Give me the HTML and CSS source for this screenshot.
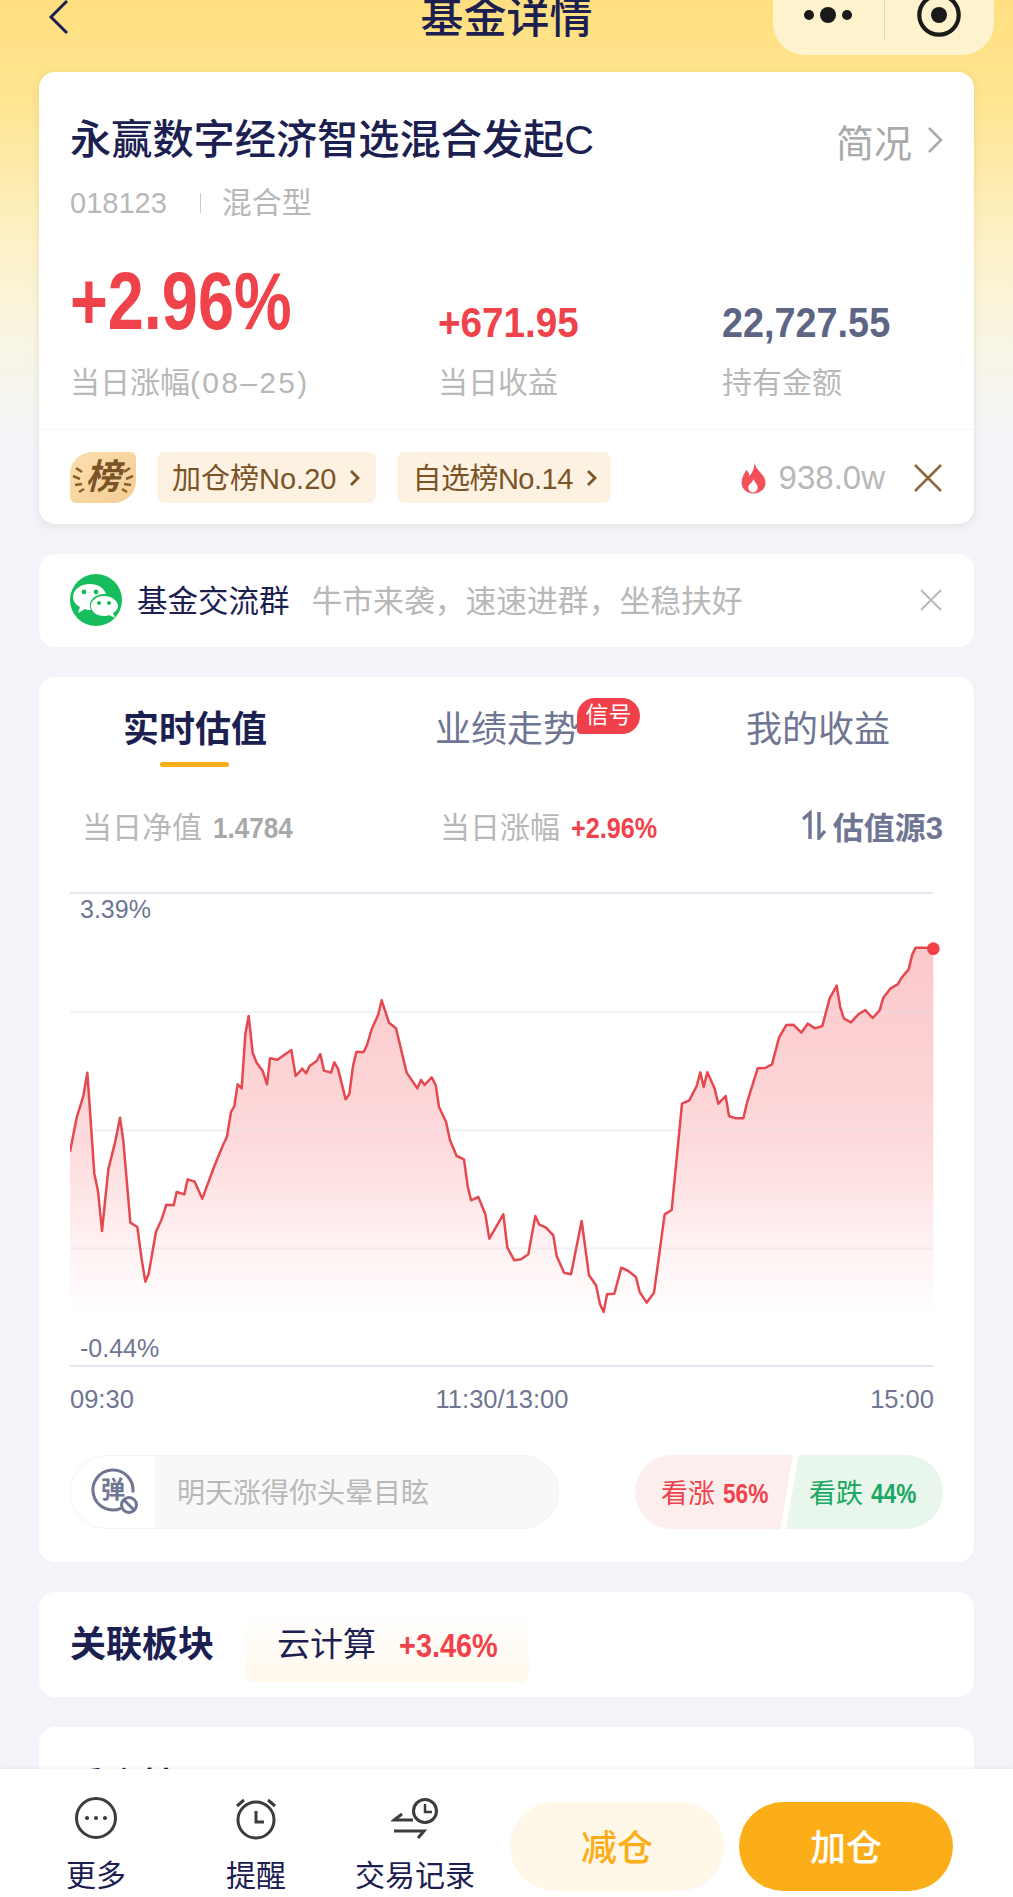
FILE: index.html
```html
<!DOCTYPE html>
<html lang="zh-CN">
<head>
    <meta charset="UTF-8">
    <meta name="viewport" content="width=device-width, initial-scale=1.0">
    <title>基金详情</title>
    <link rel="stylesheet" href="styles.css">
</head>
<body>
<div class="page">
    <div class="scroll">
        <div class="nav">
            <svg class="nav-back" width="24" height="38" viewBox="0 0 24 38"><path d="M20 2 L4 18 L20 34" fill="none" stroke="#1c2050" stroke-width="3"/></svg>
            <div class="nav-title">基金详情</div>
            <div class="capsule">
                <svg width="48" height="16" viewBox="0 0 48 16"><circle cx="5" cy="8" r="5" fill="#1a1a1a"/><circle cx="24" cy="8" r="8" fill="#1a1a1a"/><circle cx="43" cy="8" r="5" fill="#1a1a1a"/></svg>
                <i class="capsule-line"></i>
                <svg width="46" height="46" viewBox="0 0 46 46"><circle cx="23" cy="23" r="19.7" fill="none" stroke="#1a1a1a" stroke-width="4.2"/><circle cx="23" cy="23" r="8" fill="#1a1a1a"/></svg>
            </div>
        </div>

        <div class="card fund">
            <div class="fund-head">
                <div class="fund-name">永赢数字经济智选混合发起C</div>
                <div class="fund-more">简况<svg width="16" height="28" viewBox="0 0 16 28"><path d="M2 2 L14 14 L2 26" fill="none" stroke="#aaa" stroke-width="2.5"/></svg></div>
            </div>
            <div class="fund-meta"><span class="fund-code">018123</span><i></i><span>混合型</span></div>
            <div class="stats">
                <div class="stat stat-main">
                    <div class="num num-big red">+2.96%</div>
                    <div class="stat-label">当日涨幅<span class="stat-date">(08–25)</span></div>
                </div>
                <div class="stat stat-mid">
                    <div class="num num-gain red">+671.95</div>
                    <div class="stat-label">当日收益</div>
                </div>
                <div class="stat stat-hold">
                    <div class="num num-hold slate">22,727.55</div>
                    <div class="stat-label">持有金额</div>
                </div>
            </div>
            <div class="rank-row">
                <div class="rank-badge">
                    <svg width="66" height="51" viewBox="0 0 66 51"><path d="M6 16 L12 20 M3 24 L10 27 M5 33 L12 32 M9 40 L14 37 M60 16 L54 20 M63 24 L56 27 M61 33 L54 32 M57 40 L52 37" stroke="#8a5f2a" stroke-width="2.5" fill="none"/></svg>
                    <span>榜</span>
                </div>
                <div class="chip">加仓榜No.20<svg width="11" height="18" viewBox="0 0 11 18"><path d="M2 2 L9 9 L2 16" fill="none" stroke="#7a5426" stroke-width="2.8"/></svg></div>
                <div class="chip chip-pick">自选榜No.14<svg width="11" height="18" viewBox="0 0 11 18"><path d="M2 2 L9 9 L2 16" fill="none" stroke="#7a5426" stroke-width="2.8"/></svg></div>
                <div class="heat">
                    <svg width="27" height="32" viewBox="0 0 26 30"><path d="M14 0 C15 6 20 9 23 14 C27 21 23 29 14 30 C5 30 0 24 2 16 C3 12 5 10 6 7 C8 9 9 11 9 13 C12 10 14 5 14 0 Z" fill="#f4505a"/><path d="M13 16 C14 19 17 21 17 24 C17 27 15 29 13 29 C10 29 8 27 8 24 C8 21 12 20 13 16 Z" fill="#fff"/></svg>
                    <span>938.0w</span>
                </div>
                <svg class="rank-close" width="30" height="30" viewBox="0 0 30 30"><path d="M2 2 L28 28 M28 2 L2 28" stroke="#8a6a3a" stroke-width="2.5"/></svg>
            </div>
        </div>

        <div class="card group">
            <svg class="wx" width="52" height="52" viewBox="0 0 52 52">
                <circle cx="26" cy="26" r="26" fill="#16bd5c"/>
                <path d="M20 10 C10 10 3 16 3 23 C3 27 6 31 10 33 L8 39 L15 35 C17 36 19 36 21 36 C20 34 20 33 20 31 C20 25 26 20 34 20 L36 20 C34 14 28 10 20 10 Z" fill="#fff"/>
                <path d="M34 22 C26 22 21 27 21 32 C21 38 27 42 34 42 C36 42 37 42 39 41 L45 44 L43 39 C46 37 48 35 48 32 C48 27 42 22 34 22 Z" fill="#fff"/>
                <circle cx="14" cy="18" r="2.4" fill="#16bd5c"/><circle cx="26" cy="18" r="2.4" fill="#16bd5c"/>
                <circle cx="29" cy="29" r="2" fill="#16bd5c"/><circle cx="39" cy="29" r="2" fill="#16bd5c"/>
            </svg>
            <span class="group-name">基金交流群</span>
            <span class="group-desc">牛市来袭&#65292;速速进群&#65292;坐稳扶好</span>
            <svg class="group-close" width="24" height="24" viewBox="0 0 24 24"><path d="M2 2 L22 22 M22 2 L2 22" stroke="#bbb" stroke-width="2.2"/></svg>
        </div>

        <div class="card trend">
            <div class="tabs">
                <div class="tab tab-on">实时估值</div>
                <div class="tab">业绩走势<span class="signal">信号</span></div>
                <div class="tab">我的收益</div>
            </div>
            <div class="summary">
                <div class="sum-item sum-first">当日净值 <b class="sum-nav">1.4784</b></div>
                <div class="sum-item sum-second">当日涨幅 <b class="sum-rise red">+2.96%</b></div>
                <div class="sum-src">
                    <svg width="26" height="30" viewBox="0 0 26 30"><path d="M9 29 L9 3 L2 9 M18 2 L18 28 L24 21" fill="none" stroke="#6f7592" stroke-width="3.4"/></svg>
                    估值源3
                </div>
            </div>
            <div class="chart">
                <svg class="chart-svg" width="875" height="500" viewBox="60 0 2625 1500">
                    <defs>
                        <linearGradient id="area" x1="0" y1="0" x2="0" y2="1">
                            <stop offset="0" stop-color="#fbc8cb"/>
                            <stop offset="0.5" stop-color="#fdd8da"/>
                            <stop offset="0.8" stop-color="#fff0f1"/>
                            <stop offset="1" stop-color="#ffffff"/>
                        </linearGradient>
                    </defs>
                    <path class="chart-top" d="M60 36 H2650"/>
                    <path fill="url(#area)" d="M60 1300 L60 812 L80 710 L100 645 L112 575 L133 878 L144 930 L156 1050 L175 865 L195 785 L210 710 L220 780 L241 1025 L262 1038 L275 1135 L286 1202 L296 1178 L318 1052 L335 1015 L349 971 L371 973 L380 933 L403 940 L413 895 L434 902 L457 953 L492 858 L520 790 L531 767 L543 693 L553 675 L563 610 L575 622 L586 460 L596 405 L608 515 L620 545 L638 570 L651 610 L660 532 L682 536 L724 507 L737 585 L757 563 L768 577 L779 555 L800 540 L811 519 L822 569 L843 575 L853 544 L864 563 L887 655 L898 640 L909 555 L919 513 L941 513 L951 492 L965 445 L985 400 L995 358 L1017 425 L1038 442 L1070 575 L1102 622 L1113 597 L1124 612 L1145 589 L1157 612 L1167 678 L1188 722 L1200 778 L1220 825 L1242 835 L1253 915 L1263 958 L1285 948 L1306 1000 L1318 1073 L1360 1000 L1372 1100 L1393 1138 L1413 1135 L1435 1120 L1456 1005 L1467 1030 L1488 1040 L1510 1063 L1520 1125 L1542 1175 L1563 1180 L1595 1020 L1617 1183 L1638 1213 L1650 1270 L1661 1293 L1671 1240 L1693 1238 L1714 1160 L1735 1170 L1758 1188 L1769 1233 L1790 1265 L1812 1235 L1844 1000 L1865 987 L1896 668 L1918 658 L1940 615 L1951 574 L1961 618 L1972 574 L1993 620 L2005 668 L2027 645 L2037 705 L2058 712 L2080 712 L2091 665 L2123 562 L2145 561 L2166 550 L2187 470 L2209 432 L2230 431 L2254 455 L2273 428 L2295 442 L2317 435 L2339 352 L2360 314 L2371 380 L2382 413 L2403 424 L2425 400 L2446 387 L2468 411 L2489 388 L2500 350 L2522 322 L2543 310 L2555 290 L2576 265 L2587 220 L2597 200 L2640 200 L2650 203 L2650 1300 Z"/>
                    <path class="chart-grid" d="M60 393 H2650 M60 748 H2650 M60 1102 H2650"/>
                    <path class="chart-top" d="M60 1455 H2650"/>
                    <path class="chart-line" d="M60 812 L80 710 L100 645 L112 575 L133 878 L144 930 L156 1050 L175 865 L195 785 L210 710 L220 780 L241 1025 L262 1038 L275 1135 L286 1202 L296 1178 L318 1052 L335 1015 L349 971 L371 973 L380 933 L403 940 L413 895 L434 902 L457 953 L492 858 L520 790 L531 767 L543 693 L553 675 L563 610 L575 622 L586 460 L596 405 L608 515 L620 545 L638 570 L651 610 L660 532 L682 536 L724 507 L737 585 L757 563 L768 577 L779 555 L800 540 L811 519 L822 569 L843 575 L853 544 L864 563 L887 655 L898 640 L909 555 L919 513 L941 513 L951 492 L965 445 L985 400 L995 358 L1017 425 L1038 442 L1070 575 L1102 622 L1113 597 L1124 612 L1145 589 L1157 612 L1167 678 L1188 722 L1200 778 L1220 825 L1242 835 L1253 915 L1263 958 L1285 948 L1306 1000 L1318 1073 L1360 1000 L1372 1100 L1393 1138 L1413 1135 L1435 1120 L1456 1005 L1467 1030 L1488 1040 L1510 1063 L1520 1125 L1542 1175 L1563 1180 L1595 1020 L1617 1183 L1638 1213 L1650 1270 L1661 1293 L1671 1240 L1693 1238 L1714 1160 L1735 1170 L1758 1188 L1769 1233 L1790 1265 L1812 1235 L1844 1000 L1865 987 L1896 668 L1918 658 L1940 615 L1951 574 L1961 618 L1972 574 L1993 620 L2005 668 L2027 645 L2037 705 L2058 712 L2080 712 L2091 665 L2123 562 L2145 561 L2166 550 L2187 470 L2209 432 L2230 431 L2254 455 L2273 428 L2295 442 L2317 435 L2339 352 L2360 314 L2371 380 L2382 413 L2403 424 L2425 400 L2446 387 L2468 411 L2489 388 L2500 350 L2522 322 L2543 310 L2555 290 L2576 265 L2587 220 L2597 200 L2640 200 L2650 203"/>
                    <circle cx="2650" cy="203" r="19" fill="#f04049"/>
                </svg>
                <span class="chart-y chart-y-top">3.39%</span>
                <span class="chart-y chart-y-low">-0.44%</span>
            </div>
            <div class="times"><span>09:30</span><span>11:30/13:00</span><span>15:00</span></div>
            <div class="opinion">
                <div class="danmu">
                    <div class="danmu-icon">
                        <svg width="48" height="52" viewBox="0 0 48 52"><path d="M31 42.3 A20 20 0 1 1 42.8 26.5" fill="none" stroke="#6f7592" stroke-width="3"/><circle cx="39" cy="39" r="7.5" fill="#fff" stroke="#6f7592" stroke-width="3"/><path d="M34 34 L44 44" stroke="#6f7592" stroke-width="3"/></svg>
                        <span>弹</span>
                    </div>
                    <div class="danmu-text">明天涨得你头晕目眩</div>
                </div>
                <div class="vote">
                    <div class="vote-up">看涨 <b>56%</b></div>
                    <div class="vote-down">看跌 <b>44%</b></div>
                </div>
            </div>
        </div>

        <div class="card sector">
            <div class="sector-title">关联板块</div>
            <div class="sector-chip">云计算<b class="red">+3.46%</b></div>
        </div>

        <div class="card peek">
            <div class="peek-title">重仓持股</div>
        </div>
    </div>

    <div class="bar">
        <div class="bar-item bar-more">
            <svg width="44" height="44" viewBox="0 0 44 44"><circle cx="22" cy="22" r="19.5" fill="none" stroke="#3c3c3c" stroke-width="3"/><circle cx="13" cy="22" r="2.1" fill="#3c3c3c"/><circle cx="22" cy="22" r="2.1" fill="#3c3c3c"/><circle cx="31" cy="22" r="2.1" fill="#3c3c3c"/></svg>
            <span>更多</span>
        </div>
        <div class="bar-item bar-remind">
            <svg width="44" height="44" viewBox="0 0 44 44"><circle cx="22" cy="24" r="18" fill="none" stroke="#3c3c3c" stroke-width="3"/><path d="M22 15 V26 H30 M3 10 L10 4 M41 10 L34 4" fill="none" stroke="#3c3c3c" stroke-width="3"/></svg>
            <span>提醒</span>
        </div>
        <div class="bar-item bar-record">
            <svg width="48" height="44" viewBox="0 0 48 44"><circle cx="34" cy="15" r="11.5" fill="none" stroke="#3c3c3c" stroke-width="3"/><path d="M34 8 V16 H41" fill="none" stroke="#3c3c3c" stroke-width="2.5"/><path d="M11 18 L3 24 H22 M3 35 H33 L27 42" fill="none" stroke="#3c3c3c" stroke-width="3"/></svg>
            <span>交易记录</span>
        </div>
        <div class="btn btn-sell">减仓</div>
        <div class="btn btn-buy">加仓</div>
    </div>
</div>
</body>
</html>
```

FILE: styles.css
```css
* {
    box-sizing: border-box;
}
body {
    margin: 0;
    font-family: "Liberation Sans", "Noto Sans CJK SC", sans-serif;
    color: #1c2050;
}
i {
    display: block;
}
.red {
    color: #ef424b;
}
.slate {
    color: #5d6484;
}
.page {
    width: 1013px;
    height: 1897px;
    display: flex;
    flex-direction: column;
    overflow: hidden;
    background: #f3f4fa;
}
.scroll {
    flex: 1;
    min-height: 0;
    overflow: hidden;
    padding: 0 39px;
    background: linear-gradient(180deg, #ffdf80 0, #ffe591 100px, #fdf1c6 240px, #f8f5e4 344px, #f3f4fa 447px);
}

/* top nav */
.nav {
    height: 72px;
    margin: 0 -39px;
    padding-left: 47px;
    display: flex;
    align-items: flex-start;
    position: relative;
}
.nav-back {
    margin-top: -1px;
}
.nav-title {
    position: absolute;
    left: 0;
    right: 0;
    top: -7px;
    text-align: center;
    font-size: 43px;
    line-height: 50px;
    font-weight: 500;
}
.capsule {
    position: absolute;
    left: 773px;
    top: -12px;
    width: 221px;
    height: 67px;
    border-radius: 0 0 32px 32px;
    background: rgba(255, 255, 255, 0.6);
    display: flex;
    align-items: center;
    padding: 0 32px 13px 31px;
    justify-content: space-between;
}
.capsule-line {
    width: 1px;
    height: 40px;
    background: #e4d9b4;
    align-self: flex-start;
    margin-top: 12px;
}

.card {
    background: #fff;
    border-radius: 16px;
    margin-bottom: 30px;
}

/* fund card */
.fund {
    height: 452px;
    padding: 0 31px;
    box-shadow: 0 2px 8px rgba(90, 80, 40, 0.12);
}
.fund-head {
    display: flex;
    justify-content: space-between;
    align-items: center;
    padding-top: 43px;
    height: 93px;
}
.fund-name {
    font-size: 41.2px;
    line-height: 50px;
    font-weight: 500;
}
.fund-more {
    color: #aaa;
    font-size: 38px;
    display: flex;
    align-items: center;
    gap: 15px;
}
.fund-meta {
    display: flex;
    align-items: center;
    margin-top: 18px;
    font-size: 30px;
    line-height: 40px;
    color: #b8b8b8;
}
.fund-code {
    font-size: 29px;
}
.fund-meta i {
    width: 1px;
    height: 20px;
    background: #ccc;
    margin: 0 21px 0 33px;
}
.stats {
    display: flex;
    align-items: flex-end;
    margin-top: 36px;
}
.stat {
    flex: none;
}
.stat-main {
    width: 368px;
}
.stat-mid {
    width: 284px;
}
.num {
    font-size: 42px;
    font-weight: 700;
    line-height: 50px;
    width: 100%;
    white-space: nowrap;
    transform-origin: left center;
}
.num-big {
    font-size: 82px;
    line-height: 84px;
    transform: scaleX(0.79);
}
.num-gain {
    transform: scaleX(0.92);
}
.num-hold {
    transform: scaleX(0.9);
}
.stat-label {
    font-size: 30px;
    line-height: 40px;
    color: #b8b8b8;
    margin-top: 20px;
}
.stat-mid .stat-label,
.stat-hold .stat-label {
    margin-top: 15px;
}
.stat-date {
    letter-spacing: 2.3px;
}
.rank-row {
    margin: 26px -31px 0;
    padding: 22px 31px 0;
    border-top: 1px solid #f7f7f7;
    display: flex;
    align-items: center;
}
.rank-badge {
    width: 66px;
    height: 51px;
    border-radius: 22px 6px 22px 6px;
    background: linear-gradient(135deg, #fbdfb0, #f5cd93);
    position: relative;
    text-align: center;
    color: #7a5426;
    font-size: 35px;
    line-height: 50px;
    font-weight: 700;
    font-style: italic;
}
.rank-badge svg {
    position: absolute;
    left: 0;
    top: 0;
}
.rank-badge span {
    position: relative;
}
.chip {
    height: 51px;
    margin-left: 21px;
    padding: 0 16px 3px 15px;
    border-radius: 8px;
    background: #fdf1e2;
    color: #7a5426;
    font-size: 29px;
    display: flex;
    align-items: center;
    gap: 13px;
}
.chip svg {
    margin-top: 3px;
}
.chip-pick {
    letter-spacing: -0.5px;
    padding-right: 14px;
}
.heat {
    margin-left: auto;
    display: flex;
    align-items: center;
    gap: 12px;
    color: #b8b8b8;
    font-size: 33px;
}
.rank-close {
    margin-left: 28px;
}

/* wechat group */
.group {
    height: 93px;
    padding: 0 31px 2px;
    display: flex;
    align-items: center;
}
.wx {
    flex: none;
}
.group-name {
    margin: 0 0 2px 15px;
    font-size: 30.5px;
}
.group-desc {
    margin: 0 0 2px 22px;
    font-size: 30.8px;
    color: #b8b8b8;
}
.group-close {
    margin-left: auto;
}

/* trend card */
.trend {
    height: 885px;
    padding: 0 31px;
}
.tabs {
    display: flex;
    height: 108px;
    margin: 0 -31px;
}
.tab {
    font-size: 36px;
    line-height: 46px;
    padding-top: 30px;
    height: 108px;
    color: #6f7592;
    flex: none;
}
.tab:nth-child(1) {
    margin-left: 84px;
    width: 312px;
}
.tab:nth-child(2) {
    width: 311px;
    position: relative;
}
.tab-on {
    font-weight: 700;
    color: #1c2050;
    position: relative;
}
.tab-on::after {
    content: "";
    position: absolute;
    left: 37px;
    bottom: 18px;
    width: 69px;
    height: 5px;
    border-radius: 3px;
    background: #fbae17;
}
.signal {
    position: absolute;
    left: 142px;
    top: 21px;
    width: 63px;
    height: 36px;
    border-radius: 18px 18px 18px 4px;
    background: #f04049;
    color: #fff;
    font-size: 23px;
    line-height: 35px;
    text-align: center;
}
.summary {
    display: flex;
    align-items: center;
    height: 68px;
    margin-top: 6px;
    color: #b8b8b8;
    font-size: 30px;
}
.sum-item b {
    display: inline-block;
    font-size: 30px;
    margin-left: 3px;
    transform-origin: left center;
}
.sum-first {
    margin-left: 12px;
    width: 358px;
}
.sum-second {
    width: 332px;
}
.sum-nav {
    color: #a8a8a8;
    transform: scaleX(0.87);
}
.sum-rise {
    transform: scaleX(0.84);
}
.sum-src {
    margin-left: auto;
    display: flex;
    align-items: center;
    gap: 6px;
    color: #6f7592;
    font-weight: 700;
    font-size: 31px;
}
.chart {
    position: relative;
    height: 500px;
    margin-top: 22px;
}
.chart-svg {
    display: block;
}
.chart-top {
    stroke: #e6e7f0;
    stroke-width: 6;
    fill: none;
}
.chart-grid {
    stroke: rgba(225, 226, 238, 0.5);
    stroke-width: 5;
    fill: none;
}
.chart-line {
    fill: none;
    stroke: #e5484f;
    stroke-width: 7.5;
    stroke-linejoin: round;
}
.chart-y {
    position: absolute;
    left: 10px;
    font-size: 25px;
    line-height: 28px;
    color: #6f7592;
}
.chart-y-top {
    top: 14px;
}
.chart-y-low {
    top: 453px;
}
.times {
    display: flex;
    justify-content: space-between;
    width: 864px;
    margin-top: 3px;
    font-size: 25.5px;
    line-height: 30px;
    color: #6f7592;
}
.opinion {
    display: flex;
    justify-content: space-between;
    margin-top: 41px;
}
.danmu {
    width: 489px;
    height: 74px;
    border-radius: 37px;
    border: 1px solid #f3f3f3;
    background: #f8f8f8;
    display: flex;
    overflow: hidden;
}
.danmu-icon {
    width: 84px;
    flex: none;
    background: #fff;
    position: relative;
    color: #6f7592;
    font-size: 24px;
    font-weight: 700;
}
.danmu-icon svg {
    position: absolute;
    left: 19px;
    top: 10px;
}
.danmu-icon span {
    position: absolute;
    left: 30px;
    top: 17px;
    line-height: 34px;
}
.danmu-text {
    margin-left: 22px;
    color: #b8b8b8;
    font-size: 28px;
    line-height: 76px;
}
.vote {
    width: 308px;
    height: 74px;
    position: relative;
    font-size: 27px;
    line-height: 78px;
}
.vote b {
    display: inline-block;
    transform: scaleX(0.84);
    transform-origin: left center;
}
.vote-up,
.vote-down {
    position: absolute;
    top: 0;
    height: 74px;
}
.vote-up {
    left: 0;
    width: 158px;
    padding-left: 26px;
    color: #ef424b;
    background: #fdeeee;
    border-radius: 37px 0 0 37px;
    clip-path: polygon(0 0, 100% 0, 92% 100%, 0 100%);
}
.vote-down {
    right: 0;
    width: 157px;
    padding-left: 23px;
    color: #1aa863;
    background: #e9f6ec;
    border-radius: 0 37px 37px 0;
    clip-path: polygon(8% 0, 100% 0, 100% 100%, 0 100%);
}

/* sector */
.sector {
    height: 105px;
    padding: 20px 31px 0;
    display: flex;
}
.sector-title {
    font-size: 36px;
    font-weight: 700;
    line-height: 66px;
    width: 175px;
}
.sector-chip {
    width: 284px;
    height: 70px;
    padding-left: 32px;
    background: linear-gradient(180deg, #fff 0, #fff8ec 100%);
    border-radius: 8px;
    font-size: 33px;
    line-height: 66px;
    display: flex;
    white-space: nowrap;
}
.sector-chip b {
    margin-left: 23px;
    font-size: 34px;
    transform: scaleX(0.85);
    transform-origin: left center;
}

/* next card, cut off by the bar */
.peek {
    height: 200px;
    margin-bottom: 0;
    padding: 37px 31px 0;
}
.peek-title {
    font-size: 36px;
    font-weight: 700;
    line-height: 46px;
}

/* bottom bar */
.bar {
    height: 128px;
    flex: none;
    background: #fff;
    box-shadow: 0 -1px 3px rgba(0, 0, 0, 0.06);
    display: flex;
    position: relative;
}
.bar-item {
    position: absolute;
    top: 27px;
    transform: translateX(-50%);
    display: flex;
    flex-direction: column;
    align-items: center;
    font-size: 30px;
    line-height: 40px;
    white-space: nowrap;
}
.bar-item span {
    margin-top: 16px;
}
.bar-more {
    left: 96px;
}
.bar-remind {
    left: 256px;
}
.bar-record {
    left: 415px;
}
.btn {
    position: absolute;
    top: 33px;
    width: 214px;
    height: 89px;
    border-radius: 45px;
    text-align: center;
    line-height: 94px;
    font-size: 36px;
    font-weight: 500;
}
.btn-sell {
    left: 510px;
    background: #fff7e8;
    color: #fbae17;
}
.btn-buy {
    left: 739px;
    background: #fbae17;
    color: #fff;
}
```
